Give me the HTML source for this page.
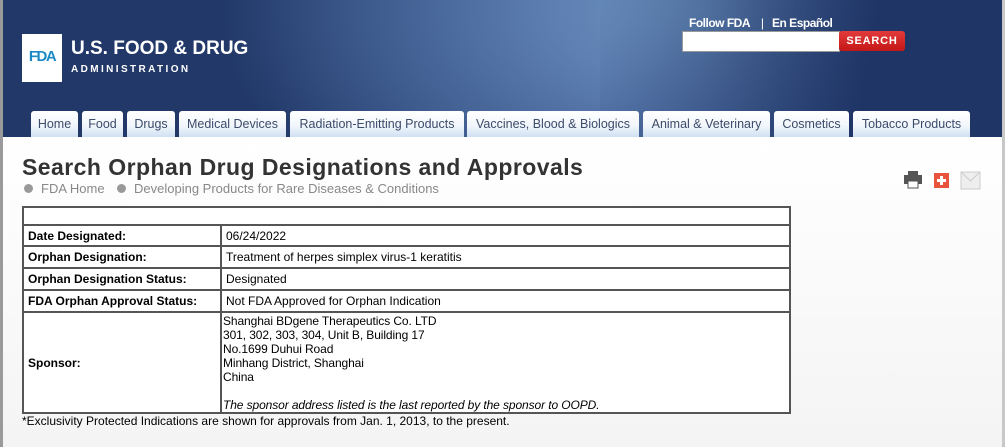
<!DOCTYPE html>
<html><head><style>
*{margin:0;padding:0;box-sizing:border-box}
body{width:1005px;height:447px;overflow:hidden;background:#f4f4f4;font-family:"Liberation Sans",Arial,sans-serif;position:relative}
#hdr{position:absolute;left:0;top:0;width:1005px;height:137px;background:radial-gradient(ellipse 480px 280px at 700px 10px,#7097c4 0%,#5a7bae 35%,#3d5a8c 70%,#213868 100%);}
#hdr:before{content:"";position:absolute;left:600px;top:0;width:405px;height:137px;background:linear-gradient(100deg,rgba(31,53,102,0) 0%,rgba(31,53,102,.7) 45%,#1f3566 65%)}
#lb{position:absolute;left:0;top:0;width:3px;height:447px;background:#9a9a9a;z-index:3}
#rb{position:absolute;right:0;top:0;width:3px;height:447px;background:#c8c8c8;z-index:3}
#logo{position:absolute;left:22px;top:34px;width:40px;height:48px;background:#fff;color:#1b8ac6;font-weight:bold;font-size:15px;letter-spacing:-1.5px;line-height:46px;text-align:center}
.t1{position:absolute;left:71px;top:38px;color:#fff;font-weight:bold;font-size:19px;letter-spacing:0}
.t2{position:absolute;left:71px;top:64px;color:#fff;font-weight:bold;font-size:10px;letter-spacing:2.4px}
.top{position:absolute;left:689px;top:16px;color:#fff;font-size:12px;font-weight:bold;letter-spacing:-.5px;z-index:2}
#sb{position:absolute;left:682px;top:31px;width:158px;height:21px;background:#fff;border:1px solid #999;z-index:2}
#sbtn{position:absolute;left:839px;top:31px;width:66px;height:20px;background:linear-gradient(#e23b3b,#c41616);border-radius:3px;color:#fff;font-size:11px;font-weight:bold;text-align:center;line-height:20px;letter-spacing:.8px;z-index:2}
.tab{position:absolute;top:111px;height:26px;background:linear-gradient(#fff 0%,#f2f7fc 55%,#cfe0f2 100%);border-radius:3px 3px 0 0;color:#3b4b6a;font-size:12.5px;line-height:26px;text-align:center;z-index:2}
#main{position:absolute;left:3px;top:137px;width:999px;height:310px;background:linear-gradient(#fff,#f4f4f4)}
h1{position:absolute;left:22px;top:154px;font-size:23px;color:#333;font-weight:bold;letter-spacing:.45px}
.bc{position:absolute;top:181px;font-size:13px;color:#888}
.dot{display:inline-block;width:9px;height:9px;border-radius:50%;background:#999;vertical-align:0;margin-right:8px}
table{position:absolute;left:22px;top:206px;width:769px;border-collapse:collapse;font-size:12px;color:#000;background:#fff}
td{border:2px solid #555;padding:0 4px;line-height:14px}
td.l{font-weight:bold;width:198px}
.spon{font-family:"Liberation Sans Narrow","Liberation Sans",sans-serif;font-size:12px;line-height:14px;padding:0 1px;letter-spacing:-.1px}
.note{position:absolute;left:22px;top:414px;font-size:12px;font-family:"Liberation Sans Narrow","Liberation Sans",sans-serif}
</style></head><body>
<div id="hdr"></div><div id="lb"></div><div id="rb"></div>
<div id="logo">FDA</div>
<div class="t1">U.S. FOOD &amp; DRUG</div>
<div class="t2">ADMINISTRATION</div>
<div class="top">Follow FDA &nbsp;&nbsp; <span style="font-weight:normal">|</span> &nbsp;&nbsp;En Español</div>
<div id="sb"></div><div id="sbtn">SEARCH</div>
<div class="tab" style="left:31px;width:47px">Home</div>
<div class="tab" style="left:82px;width:41px">Food</div>
<div class="tab" style="left:127px;width:48px">Drugs</div>
<div class="tab" style="left:179px;width:107px">Medical Devices</div>
<div class="tab" style="left:290px;width:174px">Radiation-Emitting Products</div>
<div class="tab" style="left:467px;width:172px">Vaccines, Blood &amp; Biologics</div>
<div class="tab" style="left:643px;width:127px">Animal &amp; Veterinary</div>
<div class="tab" style="left:774px;width:75px">Cosmetics</div>
<div class="tab" style="left:853px;width:117px">Tobacco Products</div>
<div id="main"></div>
<h1>Search Orphan Drug Designations and Approvals</h1>
<div class="bc" style="left:24px"><span class="dot"></span>FDA Home</div>
<div class="bc" style="left:117px"><span class="dot"></span>Developing Products for Rare Diseases &amp; Conditions</div>
<svg style="position:absolute;left:903px;top:170px" width="80" height="20">
<rect x="1" y="5" width="18" height="9" fill="#555"/><rect x="5" y="1" width="10" height="5" fill="#555"/><rect x="5" y="11" width="10" height="7" fill="#fff" stroke="#555"/>
<rect x="31" y="3" width="15" height="15" fill="#e8553c"/><path d="M38.5 6v9M34 10.5h9" stroke="#fff" stroke-width="3"/>
<rect x="58" y="2" width="19" height="17" fill="#eee" stroke="#ccc"/><path d="M58 2l9.5 9 9.5-9" fill="none" stroke="#ccc"/>
</svg>
<table>
<tr><td colspan="2" style="height:18px"></td></tr>
<tr><td class="l" style="height:21px">Date Designated:</td><td>06/24/2022</td></tr>
<tr><td class="l" style="height:22px">Orphan Designation:</td><td>Treatment of herpes simplex virus-1 keratitis</td></tr>
<tr><td class="l" style="height:22px">Orphan Designation Status:</td><td>Designated</td></tr>
<tr><td class="l" style="height:22px">FDA Orphan Approval Status:</td><td>Not FDA Approved for Orphan Indication</td></tr>
<tr><td class="l" style="height:101px">Sponsor:</td><td class="spon">Shanghai BDgene Therapeutics Co. LTD<br>301, 302, 303, 304, Unit B, Building 17<br>No.1699 Duhui Road<br>Minhang District, Shanghai<br>China<br><br><i>The sponsor address listed is the last reported by the sponsor to OOPD.</i></td></tr>
</table>
<div class="note">*Exclusivity Protected Indications are shown for approvals from Jan. 1, 2013, to the present.</div>
</body></html>
